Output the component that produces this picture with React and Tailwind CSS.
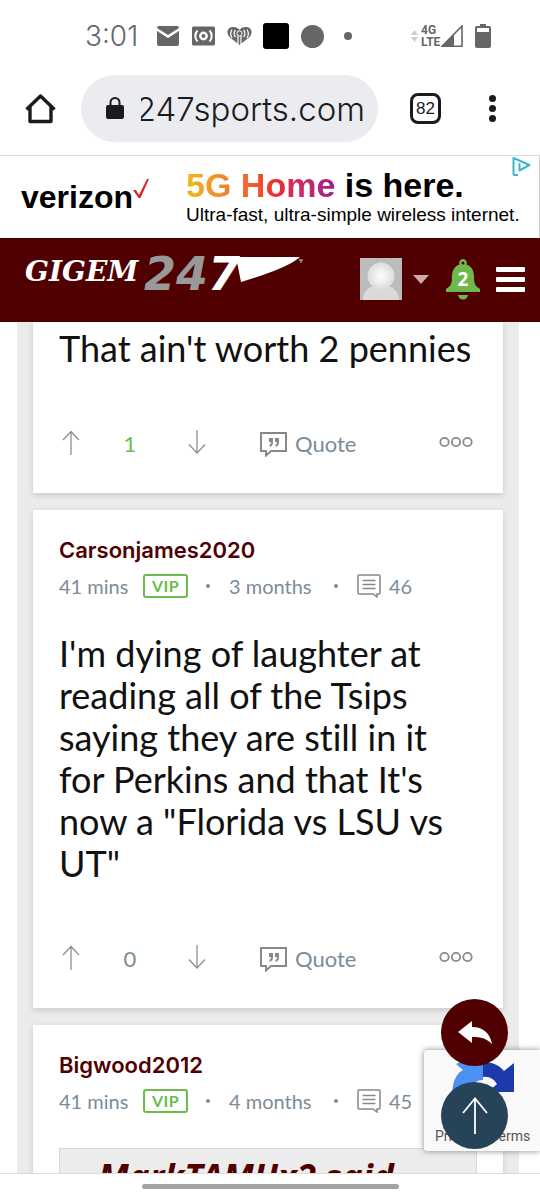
import { Fragment } from "react";

const posts = [
  {
    id: 1,
    body: "That ain't worth 2 pennies",
    votes: 1,
  },
  {
    id: 2,
    author: "Carsonjames2020",
    age: "41 mins",
    member: "3 months",
    count: 46,
    body: "I'm dying of laughter at reading all of the Tsips saying they are still in it for Perkins and that It's now a \"Florida vs LSU vs UT\"",
    votes: 0,
  },
  {
    id: 3,
    author: "Bigwood2012",
    age: "41 mins",
    member: "4 months",
    count: 45,
    quote: "MarkTAMUx2 said",
  },
];

function StatusBar() {
  return (
    <div className="flex h-[72px] shrink-0 items-center pl-[85px] pr-[49px] text-[#666]">
      <span className="w-[72px] font-['Inter'] text-[28px] font-light leading-8">3:01</span>
      <svg className="h-[20px] w-[22px]" viewBox="0 0 22 20" aria-hidden="true">
        <path d="M2 0h18a2 2 0 0 1 2 2L11 9 0 2a2 2 0 0 1 2-2zM0 5l11 7 11-7v13a2 2 0 0 1-2 2H2a2 2 0 0 1-2-2z" fill="currentColor" />
      </svg>
      <svg className="ml-[13px] h-[20px] w-[23px]" viewBox="0 0 23 20" aria-hidden="true">
        <rect width="23" height="19" y="0.5" rx="1.5" fill="currentColor" />
        <g fill="none" stroke="#fff" strokeWidth="2">
          <circle cx="11.5" cy="10" r="3.2" strokeWidth="2.4" />
          <path d="M5.5 4.5a8 8 0 0 0 0 11M17.5 4.5a8 8 0 0 1 0 11" />
        </g>
      </svg>
      <svg className="ml-[12px] h-[20px] w-[25px]" viewBox="0 0 25 20" aria-hidden="true">
        <path d="M12.5 19 3 11.5C-1 8-.5 1.5 5.5 1c3-.3 5.5 1 7 3 1.5-2 4-3.3 7-3 6 .5 6.5 7 2.5 10.5z" fill="currentColor" />
        <g fill="none" stroke="#fff" strokeWidth="1.2">
          <path d="M8.5 4a5 5 0 0 0 0 7M16.5 4a5 5 0 0 1 0 7M5 3.5a8 8 0 0 0 0 8.5M20 3.5a8 8 0 0 1 0 8.5" />
          <path d="M11 10v10M14 10v10" />
        </g>
        <circle cx="12.5" cy="7.5" r="2.6" fill="currentColor" stroke="#fff" />
      </svg>
      <span className="ml-[11px] size-[26px] rounded-[3px] bg-black" />
      <span className="ml-[12px] size-[23px] rounded-full bg-[#666]" />
      <span className="ml-[20px] size-2 rounded-full bg-[#666]" />
      <div className="ml-auto flex items-center">
        <svg className="mr-[3px] h-[12px] w-[7px]" viewBox="0 0 7 12" fill="#ccc" aria-hidden="true">
          <path d="M0 5h7L3.5 0zM0 7h7l-3.5 5z" />
        </svg>
        <span className="w-[20px] font-['Roboto'] text-[12px] font-bold leading-[12px]">
          4G
          <br />
          LTE
        </span>
        <svg className="h-[22px] w-[22px]" viewBox="0 0 22 22" aria-hidden="true">
          <path d="M1 21.2 21 1v20.2z" fill="#fff" stroke="currentColor" strokeWidth="1.6" />
          <path d="M0 22 13 9v13z" fill="currentColor" />
        </svg>
        <svg className="ml-[12px] h-[24px] w-[16px]" viewBox="0 0 16 24" aria-hidden="true">
          <path d="M5 0h6v2h3a2 2 0 0 1 2 2v18a2 2 0 0 1-2 2H2a2 2 0 0 1-2-2V4a2 2 0 0 1 2-2h3z" fill="currentColor" />
          <path d="M2 4h12v4H2z" fill="#fff" />
        </svg>
      </div>
    </div>
  );
}

function BrowserBar() {
  return (
    <div className="flex h-[84px] shrink-0 items-center border-b border-[#ddd] pb-[10px] pl-[25px] pr-[44px]">
      <button aria-label="Home">
        <svg className="size-[31px]" viewBox="0 0 31 31" fill="none" stroke="#1b1b1d" strokeWidth="3.4" aria-hidden="true">
          <path d="M1.5 16.5 15.5 3l14 13.5M5 14v14.5h21V14" strokeLinejoin="round" />
        </svg>
      </button>
      <div className="ml-[25px] flex h-[67px] min-w-0 flex-1 items-center rounded-full bg-[#ebecf0] pl-[25px] pr-[13px]">
        <svg className="h-[23px] w-[18px] shrink-0" viewBox="0 0 18 23" aria-hidden="true">
          <rect y="8" width="18" height="14" rx="2" fill="#1b1b1d" />
          <path d="M4.5 9V5.5a4.5 4.5 0 0 1 9 0V9" fill="none" stroke="#1b1b1d" strokeWidth="2" />
        </svg>
        <div className="ml-[17px] flex min-w-0 flex-1 justify-end overflow-hidden">
          <span className="shrink-0 font-['Inter'] text-[33px] font-light leading-10 text-[#1b1b1d]">247sports.com</span>
        </div>
      </div>
      <button className="ml-[32px] flex size-[31px] shrink-0 items-center justify-center rounded-[8px] border-[3px] border-[#1b1b1d] font-['Liberation_Sans'] text-[17px] leading-4 text-[#1b1b1d]">
        82
      </button>
      <button aria-label="Menu" className="ml-[48px] flex flex-col gap-[3px]">
        <span className="size-[7px] rounded-full bg-[#1b1b1d]" />
        <span className="size-[7px] rounded-full bg-[#1b1b1d]" />
        <span className="size-[7px] rounded-full bg-[#1b1b1d]" />
      </button>
    </div>
  );
}

function Ad() {
  return (
    <a href="#ad" className="relative flex h-[82px] shrink-0 items-center border-r border-[#ccc] pl-[21px] font-['Liberation_Sans'] text-black">
      <span className="text-[32px] font-bold leading-9">verizon</span>
      <svg className="mb-4 h-[20px] w-[16px]" viewBox="0 0 16 20" aria-hidden="true">
        <path d="M0 11h3l3 5L14 0h2L7.5 19h-2z" fill="#e0242c" />
      </svg>
      <div className="ml-[37px]">
        <p className="whitespace-nowrap text-[34px] font-bold leading-9">
          <span className="bg-linear-to-r from-[#f0b81c] via-[#f0282c] via-60% to-[#9c1a8c] bg-clip-text text-transparent">5G Home</span> is here.
        </p>
        <p className="whitespace-nowrap text-[19px] leading-6">Ultra-fast, ultra-simple wireless internet.</p>
      </div>
      <svg className="absolute right-[8px] top-[1px] h-[19px] w-[19px]" viewBox="0 0 19 19" fill="none" stroke="#3fb4d4" strokeWidth="2" aria-hidden="true">
        <path d="M6 18H2.5a1 1 0 0 1-1-1V1l16 7-10 5.5V6" strokeLinejoin="round" />
      </svg>
    </a>
  );
}

function Logo() {
  return (
    <svg className="h-[56px] w-[280px]" viewBox="0 0 280 56" role="img" aria-label="GIGEM247">
      <text x="1" y="33" fontFamily="DejaVu Serif" fontSize="28" fontWeight="bold" fontStyle="italic" fill="#fff">GIGEM</text>
      <text x="120" y="42" fontFamily="DejaVu Sans" fontSize="46" fontWeight="bold" fontStyle="italic" fill="#999">
        24<tspan fill="#fff">7</tspan>
      </text>
      {/* tail of the wordmark */}
      <path d="M212 9h64q-12 11-59 25z" fill="#fff" />
      <path d="M275 12h4M277 12v3" stroke="#ccc" />
    </svg>
  );
}

function SiteHeader() {
  return (
    <header className="flex h-[84px] shrink-0 items-center bg-[#500000] pb-[2px] pl-[24px] pr-[15px]">
      <a href="#home" className="mb-[6px]">
        <Logo />
      </a>
      <button aria-label="Account" className="ml-auto flex items-center">
        <svg className="size-[42px]" viewBox="0 0 42 42" aria-hidden="true">
          <defs>
            <radialGradient id="face">
              <stop offset="0" stopColor="#fff" />
              <stop offset="1" stopColor="#dcdcdc" />
            </radialGradient>
          </defs>
          <rect width="42" height="42" fill="#bcbcbc" />
          <path d="M3 42c0-9 6-15 18-15s18 6 18 15z" fill="#dadada" />
          <circle cx="21" cy="18" r="13.5" fill="url(#face)" />
        </svg>
        <svg className="ml-[11px] h-[9px] w-[16px]" viewBox="0 0 16 9" aria-hidden="true">
          <path d="M0 0h16L8 9z" fill="#cda9ac" />
        </svg>
      </button>
      <button aria-label="Notifications" className="ml-[17px]">
        <svg className="h-[41px] w-[34px]" viewBox="0 0 34 41" aria-hidden="true">
          <path d="M17 0a4 4 0 0 1 3.5 5.5C26 7.5 28 12 28 18c0 6 1 9 6 12v3H0v-3c5-3 6-6 6-12 0-6 2-10.5 7.5-12.5A4 4 0 0 1 17 0zM12 36h10c-1 6-9 6-10 0z" fill="#6fb84b" />
          <circle cx="17" cy="4" r="1.5" fill="#500000" />
          <text x="17" y="27" textAnchor="middle" fontFamily="Noto Sans" fontSize="19" fontWeight="bold" fill="#fff">2</text>
        </svg>
      </button>
      <button aria-label="Open menu" className="ml-[16px] flex w-[29px] flex-col gap-[5px]">
        <span className="h-[5px] rounded-[1px] bg-white" />
        <span className="h-[5px] rounded-[1px] bg-white" />
        <span className="h-[5px] rounded-[1px] bg-white" />
      </button>
    </header>
  );
}

function Arrow({ down }) {
  return (
    <svg className="h-[25px] w-[18px]" viewBox="0 0 18 25" fill="none" stroke="#8b9096" strokeWidth="1.3" aria-hidden="true">
      {down ? <path d="M9 0v23M1 14.5 9 23l8-8.5" /> : <path d="M9 25V1.5M1 10l8-8.5 8 8.5" />}
    </svg>
  );
}

function Actions({ votes }) {
  return (
    <div className="mt-[53px] flex h-10 items-center pr-1 text-[22px] leading-6 text-[#7b8c99]">
      <button aria-label="Upvote" className="ml-[3px]">
        <Arrow />
      </button>
      <span className={`mr-[8px] w-[100px] pt-1 text-center ${votes > 0 ? "text-[#6dbb4a]" : ""}`}>{votes}</span>
      <button aria-label="Downvote">
        <Arrow down />
      </button>
      <button className="ml-[54px] flex items-center gap-[8px] pt-1">
        <svg className="h-[25px] w-[27px]" viewBox="0 0 27 25" aria-hidden="true">
          <path d="M1 1h25v18H11l-5 4.5V19H1z" fill="none" stroke="#85898d" strokeWidth="2" />
          <path d="M9 6h4v4q0 4-3.5 5v-2q1.5-1 1.5-3H9zM15 6h4v4q0 4-3.5 5v-2q1.5-1 1.5-3h-2z" fill="#85898d" />
        </svg>
        Quote
      </button>
      <button aria-label="More" className="ml-auto">
        <svg className="h-[12px] w-[34px]" viewBox="0 0 34 12" fill="none" stroke="#85898d" strokeWidth="1.8" aria-hidden="true">
          <circle cx="5.5" cy="6" r="4.2" />
          <circle cx="17" cy="6" r="4.2" />
          <circle cx="28.5" cy="6" r="4.2" />
        </svg>
      </button>
    </div>
  );
}

function Meta({ post }) {
  return (
    <div className="mt-[12px] flex h-6 items-center text-[20px] leading-6 text-[#7b8c99]">
      <span className="w-[84px] whitespace-nowrap">{post.age}</span>
      <span className="flex h-6 w-[45px] items-center justify-center rounded-[3px] border-2 border-[#6dbb4a] text-[16px] font-bold tracking-wide text-[#6dbb4a]">
        VIP
      </span>
      <span className="ml-[18px] size-1 rounded-full bg-[#7b8c99]" />
      <span className="ml-[19px] w-[87px] whitespace-nowrap">{post.member}</span>
      <span className="ml-[18px] size-1 rounded-full bg-[#7b8c99]" />
      <svg className="ml-[19px] h-6 w-6" viewBox="0 0 24 24" fill="none" stroke="#85898d" strokeWidth="1.5" aria-hidden="true">
        <path d="M2 1h20a1 1 0 0 1 1 1v17a1 1 0 0 1-1 1h-2v3l-4-3H2a1 1 0 0 1-1-1V2a1 1 0 0 1 1-1zM5.5 6.5h13M5.5 10.5h13M5.5 14.5h13" />
      </svg>
      <span className="ml-[8px]">{post.count}</span>
    </div>
  );
}

function Post({ post }) {
  return (
    <article
      className={`bg-white px-[26px] pb-[31px] shadow-[0_2px_6px_rgba(0,0,0,0.15)] ${post.author ? "pt-[28px]" : "pt-[5px]"}`}
    >
      {post.author && (
        <Fragment>
          <h2 className="font-['Inter'] text-[22px] font-semibold leading-6 text-[#500000]">{post.author}</h2>
          <Meta post={post} />
        </Fragment>
      )}
      {post.quote && (
        <blockquote className="mt-[35px] whitespace-nowrap border border-[#d8d8d8] bg-[#ececec] px-[38px] pt-[7px] pb-6 font-['Noto_Sans'] text-[35px] font-bold italic leading-[42px] text-[#500000]">
          {post.quote}
        </blockquote>
      )}
      {post.body && (
        <Fragment>
          <p className={`text-[36px] leading-[42px] text-[#111] [font-variant-ligatures:none] ${post.author ? "mt-[34px]" : ""}`}>
            {post.body}
          </p>
          <Actions votes={post.votes} />
        </Fragment>
      )}
    </article>
  );
}

export default function App() {
  return (
    <div className="relative flex h-screen flex-col overflow-hidden bg-white font-['Lato',sans-serif]">
      <StatusBar />
      <BrowserBar />
      <Ad />
      <SiteHeader />

      <main className="ml-[17px] mr-[21px] flex min-h-0 flex-1 flex-col gap-[17px] overflow-hidden bg-[#ebebeb] px-4">
        {posts.map((post) => (
          <Post key={post.id} post={post} />
        ))}
      </main>

      {/* Bottom gesture bar */}
      <footer className="flex h-[27px] shrink-0 justify-center border-t border-[#ddd] bg-white pt-[10px]">
        <span className="h-[5px] w-[257px] rounded-full bg-[#a3a3a3]" />
      </footer>

      {/* reCAPTCHA badge */}
      <div className="absolute bottom-[49px] right-0 h-[101px] w-[116px] overflow-hidden rounded-l-[3px] bg-[#f9f9f9] shadow-[0_0_6px_#888]">
        <svg className="absolute left-[28px] top-[12px] size-[62px]" viewBox="0 0 62 62" aria-hidden="true">
          <path d="M31 0v18c-8 0-12 5-13 13H0C1 18 5 11 11 8L4 2 8 0z" fill="#4a90f5" />
          <path d="M31 0c9 0 16 3 21 9l10-8v29H36l9-8c-3-5-8-8-14-7z" fill="#1c3aa9" />
        </svg>
        <span className="absolute left-[11px] top-[78px] whitespace-nowrap font-['Roboto'] text-[14px] leading-4 text-[#555]">
          <a href="#privacy">Privacy</a> - <a href="#terms">Terms</a>
        </span>
      </div>

      {/* Floating buttons */}
      <div className="absolute bottom-[51px] right-[32px] flex flex-col gap-[16px]">
        <button aria-label="Reply" className="flex size-[67px] items-center justify-center rounded-full bg-[#500000]">
          <svg className="h-[24px] w-[34px]" viewBox="0 0 34 24" aria-hidden="true">
            <path d="M0 11 14 0v6c11 0 18 6 20 17-6-6-11-7-20-7v6z" fill="#fff" />
          </svg>
        </button>
        <button aria-label="Back to top" className="flex size-[67px] items-center justify-center rounded-full bg-[#264358]">
          <svg className="h-[37px] w-[26px]" viewBox="0 0 26 37" fill="none" stroke="#fff" strokeWidth="1.8" aria-hidden="true">
            <path d="M13 37V1.5M1 16 13 1.5 25 16" />
          </svg>
        </button>
      </div>
    </div>
  );
}
